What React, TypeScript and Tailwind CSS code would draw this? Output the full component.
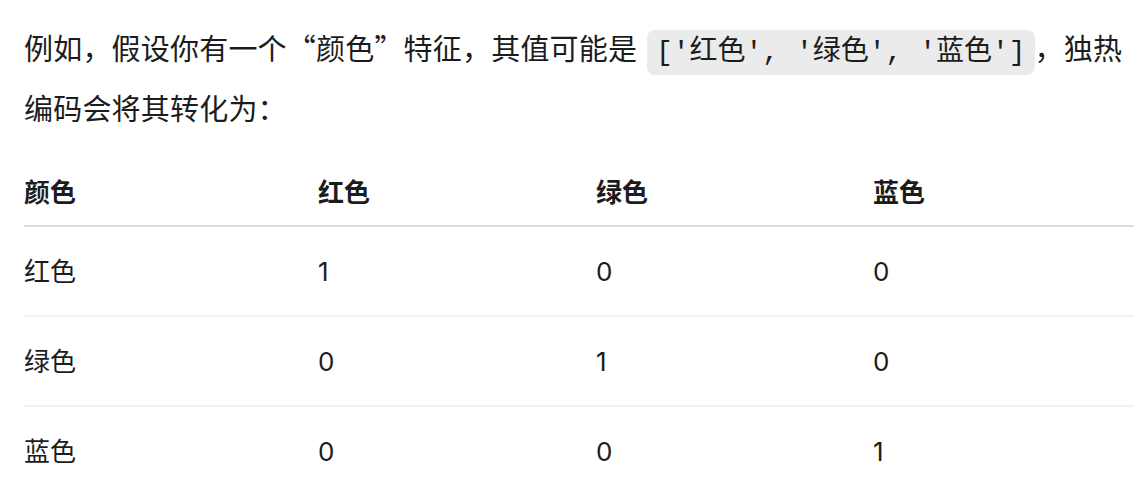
const rows = [
  ["红色", "1", "0", "0"],
  ["绿色", "0", "1", "0"],
  ["蓝色", "0", "0", "1"],
];

const headers = ["颜色", "红色", "绿色", "蓝色"];
const widths = ["w-[294px]", "w-[278px]", "w-[277px]", "w-[261px]"];

export default function App() {
  return (
    <div className="min-h-screen bg-white pl-6 pr-[10px] pt-5 text-[#1c1c1c]">
      <p className="text-[29px] leading-[55px] tracking-[0.2px] font-['Noto_Sans_CJK_SC','Inter',sans-serif]">
        例如，假设你有一个“颜色”特征，其值可能是{" "}
        <code className="ml-[3px] rounded-lg bg-[#ebebeb] px-[9px] py-[7px] tracking-normal font-['Liberation_Mono','Noto_Sans_CJK_SC',monospace] text-[28px]">
          ['红色', '绿色', '蓝色']
        </code>
        ，独热编码会将其转化为：
      </p>

      <table className="mt-7 w-[1110px] table-fixed border-collapse text-[26px] font-['Inter','Noto_Sans_CJK_SC',sans-serif]">
        <thead>
          <tr className="border-b-2 border-[#dcdcdc]">
            {headers.map((h, i) => (
              <th key={i} className={`${widths[i]} h-[63px] pb-1 text-left font-bold`}>
                {h}
              </th>
            ))}
          </tr>
        </thead>
        <tbody>
          {rows.map((r, ri) => (
            <tr key={ri} className={ri < rows.length - 1 ? "border-b-2 border-[#f1f1f1]" : ""}>
              {r.map((c, ci) => (
                <td key={ci} className="h-[90px] text-left">
                  {c}
                </td>
              ))}
            </tr>
          ))}
        </tbody>
      </table>
    </div>
  );
}
